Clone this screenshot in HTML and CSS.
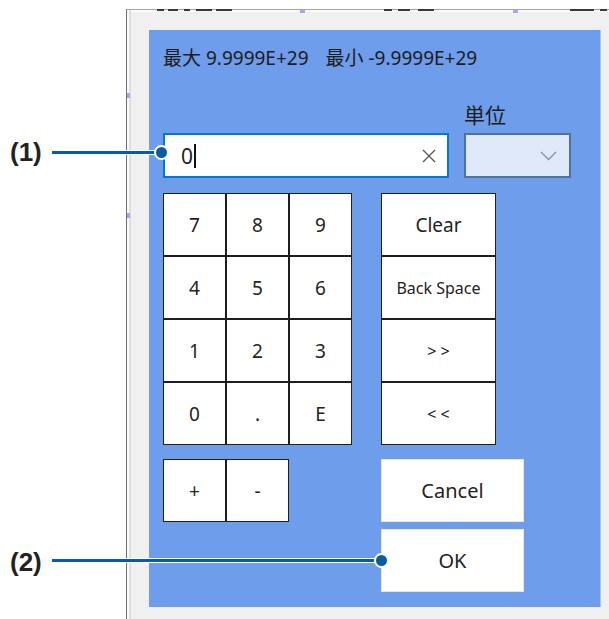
FILE: index.html
```html
<!DOCTYPE html>
<html lang="ja">
<head>
<meta charset="utf-8">
<title>数値入力</title>
<link rel="stylesheet" href="styles.css">
</head>
<body>
<div class="dialog">
  <div class="panel">
    <div class="limits"><span>最大 9.9999E+29</span><span>最小 -9.9999E+29</span></div>
    <div class="entry">
      <div class="unit-label">単位</div>
      <div class="input">
        <span class="value">0</span><span class="caret"></span>
        <svg class="clear-x" width="14" height="14" viewBox="0 0 14 14"><path d="M1 1L13 13M13 1L1 13" stroke="#555" stroke-width="1.3" fill="none"/></svg>
      </div>
      <div class="select">
        <svg width="17" height="10" viewBox="0 0 17 10"><path d="M1 1L8.5 8.5L16 1" stroke="#8a8f99" stroke-width="1.3" fill="none"/></svg>
      </div>
    </div>
    <div class="pads">
      <div class="keypad">
        <button class="key">7</button><button class="key">8</button><button class="key">9</button>
        <button class="key">4</button><button class="key">5</button><button class="key">6</button>
        <button class="key">1</button><button class="key">2</button><button class="key">3</button>
        <button class="key">0</button><button class="key">.</button><button class="key">E</button>
      </div>
      <div class="funcs">
        <button class="key">Clear</button>
        <button class="key small">Back Space</button>
        <button class="key arrows">&gt; &gt;</button>
        <button class="key arrows">&lt; &lt;</button>
      </div>
    </div>
    <div class="bottom">
      <div class="signs">
        <button class="key">+</button><button class="key">-</button>
      </div>
      <div class="actions">
        <button class="action">Cancel</button>
        <button class="action">OK</button>
      </div>
    </div>
  </div>
</div>

<div class="header-clip">
  <span class="frag f1"></span><span class="frag f2"></span><span class="frag f3"></span><span class="frag f4"></span><span class="frag f5"></span>
  <span class="frag f6"></span><span class="frag f7"></span><span class="frag f8"></span>
  <span class="frag f9"></span><span class="frag f10"></span>
</div>

<span class="handle hd1"></span><span class="handle hd2"></span><span class="handle hd3"></span><span class="handle hd4"></span>

<div class="callout c1">(1)</div>
<div class="lead l1"></div>
<div class="dot d1"></div>

<div class="callout c2">(2)</div>
<div class="lead l2"></div>
<div class="dot d2"></div>
</body>
</html>
```
FILE: styles.css
```css
* { box-sizing: border-box; }
html, body { margin: 0; padding: 0; }
body {
  width: 609px;
  height: 619px;
  overflow: hidden;
  background: #ffffff;
  position: relative;
  font-family: "Noto Sans", "Noto Sans CJK JP", sans-serif;
  color: #1f1f1f;
}

.dialog {
  margin: 9px 0 0 126px;
  height: 610px;
  border-left: 1px solid #6e6e6e;
  border-top: 1px solid #a5a5a5;
  background: #f0f0f0;
  box-shadow: inset 2px 0 0 #fbfbfb, inset 4px 0 0 #dedede, inset 0 2px 0 #fafafa;
  padding: 20px 8px 0 22px;
}

.panel {
  background: #6e9deb;
  height: 577px;
  padding: 17px 0 0 14px;
  border-right: 1px solid #a9c4f2;
}

.limits {
  display: flex;
  gap: 17px;
  font-size: 19px;
  line-height: 22px;
  white-space: pre;
  color: #1c1c1c;
}

.entry {
  display: grid;
  grid-template-columns: 286px 107px;
  column-gap: 15px;
  margin-top: 34px;
}
.unit-label {
  grid-column: 2;
  grid-row: 1;
  font-size: 21px;
  line-height: 24px;
  margin-bottom: 6px;
  color: #1c1c1c;
}
.input {
  grid-column: 1;
  grid-row: 2;
  height: 45px;
  border: 2px solid #0078d7;
  background: #ffffff;
  display: flex;
  align-items: center;
  padding-left: 16px;
}
.value { font-size: 21px; line-height: 24px; color: #222; }
.caret { width: 2px; height: 24px; background: #111; margin-left: 1px; }
.clear-x { margin-left: auto; margin-right: 11px; }
.select {
  grid-column: 2;
  grid-row: 2;
  height: 45px;
  border: 2px solid #50709f;
  background: #dfe8f8;
  display: flex;
  align-items: center;
  justify-content: flex-end;
  padding-right: 12px;
}

.pads {
  display: flex;
  gap: 29px;
  margin-top: 15px;
}
.keypad {
  display: grid;
  grid-template-columns: repeat(3, 63px);
  grid-auto-rows: 63px;
}
.funcs {
  display: grid;
  grid-template-columns: 115px;
  grid-auto-rows: 63px;
}
.key {
  margin: 0;
  padding: 0;
  background: #ffffff;
  border: 1px solid #1e1e1e;
  font-family: "Noto Sans", sans-serif;
  font-size: 19px;
  color: #222;
}
.key.small { font-size: 16px; }
.key.arrows { font-size: 16px; }

.bottom {
  display: flex;
  gap: 92px;
  margin-top: 14px;
}
.signs {
  display: grid;
  grid-template-columns: repeat(2, 63px);
  grid-template-rows: 63px;
  align-self: flex-start;
}
.actions {
  display: flex;
  flex-direction: column;
  gap: 7px;
}
.action {
  margin: 0;
  padding: 0;
  width: 143px;
  height: 63px;
  background: #ffffff;
  border: 1px solid #e6e6e6;
  font-family: "Noto Sans", sans-serif;
  font-size: 20px;
  color: #222;
}

/* clipped glyph bottoms of the window behind */
.header-clip {
  position: absolute;
  top: 0;
  left: 0;
  width: 609px;
  height: 14px;
}
.frag {
  position: absolute;
  top: 9px;
  height: 2px;
  background: #3a3a3a;
}
.f1 { left: 157px; width: 7px; }
.f2 { left: 168px; width: 10px; }
.f3 { left: 184px; width: 6px; }
.f4 { left: 196px; width: 16px; }
.f5 { left: 216px; width: 16px; }
.f6 { left: 384px; width: 8px; }
.f7 { left: 398px; width: 12px; }
.f8 { left: 418px; width: 16px; }
.f9 { left: 570px; width: 24px; }
.f10 { left: 600px; width: 7px; }

.handle {
  position: absolute;
  width: 5px;
  height: 4px;
  background: #b3a0e8;
}
.hd1 { left: 300px; top: 9px; }
.hd2 { left: 513px; top: 9px; }
.hd3 { left: 127px; top: 93px; width: 3px; height: 5px; }
.hd4 { left: 127px; top: 213px; width: 3px; height: 5px; }

/* callouts */
.callout {
  position: absolute;
  left: 10px;
  font-family: "Liberation Sans", Arial, sans-serif;
  font-weight: bold;
  font-size: 26px;
  line-height: 28px;
  color: #222;
}
.c1 { top: 138px; }
.c2 { top: 548px; }
.lead {
  position: absolute;
  left: 52px;
  height: 3px;
  background: #0b5aa6;
  box-shadow: 0 0 0 1px #ffffff;
}
.l1 { top: 151px; width: 109px; }
.l2 { top: 559px; width: 329px; }
.dot {
  position: absolute;
  width: 15px;
  height: 15px;
  border-radius: 50%;
  background: #0b5aa6;
  border: 2px solid #ffffff;
}
.d1 { left: 154px; top: 145px; }
.d2 { left: 374px; top: 553px; }
```
